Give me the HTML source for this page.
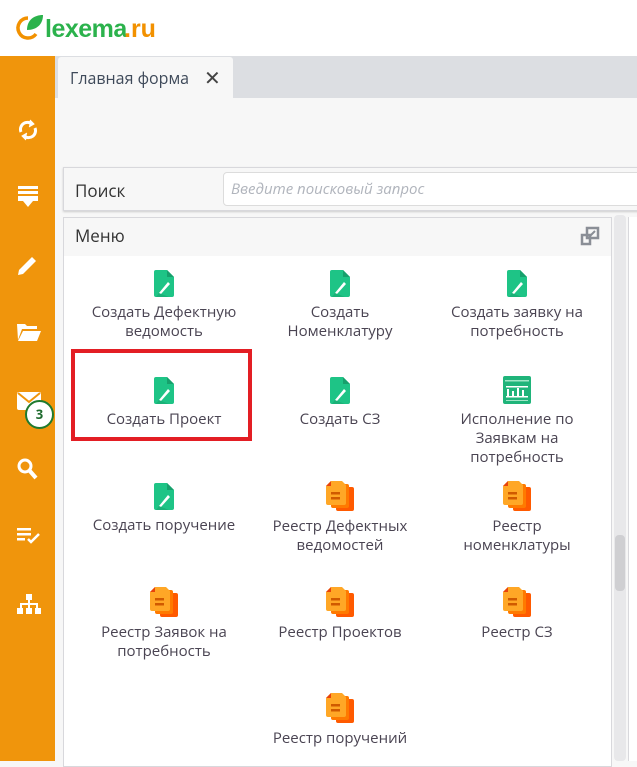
<!DOCTYPE html>
<html><head><meta charset="utf-8"><style>
*{margin:0;padding:0;box-sizing:border-box}
body{width:637px;height:761px;overflow:hidden;position:relative;background:#f7f7f7;font-family:"Open Sans","Liberation Sans","DejaVu Sans",sans-serif;color:#4a4550}
.abs{position:absolute}
.it{position:absolute;width:176px;text-align:center;font-size:15px;line-height:19px;color:#4a4452}
.it svg{display:block;margin:0 auto 6px}
.sb svg{position:absolute;left:17px}
</style></head><body>
<div class="abs" style="left:0;top:0;width:637px;height:56px;background:#fff"></div>
<svg class="abs" style="left:12px;top:10px" width="160" height="34" viewBox="0 0 160 34">
<path d="M16 8 A10 10 0 1 0 24 24" stroke="#f29100" stroke-width="3.5" fill="none"/>
<path d="M15 20 C15 10 22 5 31 5 C31 14 25 20 15 20 Z" fill="#2bb24c"/>
<text x="33" y="27" font-family="Liberation Sans,sans-serif" font-size="25" font-weight="bold" fill="#2bb24c" letter-spacing="-0.5">lexema</text>
<text x="112" y="27" font-family="Liberation Sans,sans-serif" font-size="25" font-weight="bold" fill="#f29100">.ru</text>
</svg>
<div class="abs sb" style="left:0;top:56px;width:55px;height:705px;background:#f0950c">
<svg style="top:62px" width="22" height="24" viewBox="0 0 22 24" fill="none" stroke="#fff" stroke-width="3"><path d="M4 14 A7 7 0 0 1 15 6"/><path d="M18 10 A7 7 0 0 1 7 18"/><path d="M13 2 L17 6 L12 9" fill="#fff" stroke-width="1"/><path d="M9 22 L5 18 L10 15" fill="#fff" stroke-width="1"/></svg>
<svg style="top:130px" width="22" height="22" viewBox="0 0 22 22" fill="#fff"><rect x="1" y="0" width="20" height="3"/><rect x="1" y="5" width="20" height="3"/><rect x="1" y="10" width="20" height="5"/><path d="M6 15 H16 L11 21 Z"/></svg>
<svg style="top:198px" width="22" height="22" viewBox="0 0 22 22" fill="#fff"><path d="M2 16 L15 3 L19 7 L6 20 L1 21 Z"/></svg>
<svg style="top:266px" width="24" height="20" viewBox="0 0 24 20" fill="#fff"><path d="M0 2 H8 L10 4 H20 V7 H5 L1 18 Z"/><path d="M6 9 H24 L20 19 H1 Z"/></svg>
<svg style="top:336px" width="24" height="18" viewBox="0 0 24 18" fill="#fff"><rect x="0" y="0" width="24" height="18" rx="2"/><path d="M1 1 L12 10 L23 1" stroke="#f0950c" stroke-width="2" fill="none"/></svg>
<div class="abs" style="left:25px;top:344px;width:29px;height:29px;border-radius:50%;background:#fff;border:2px solid #1f7a2e;color:#1f6b2e;font-weight:bold;font-size:13px;text-align:center;line-height:25px">3</div>
<svg style="top:402px" width="22" height="24" viewBox="0 0 22 24" fill="none" stroke="#fff" stroke-width="3"><circle cx="8" cy="8" r="6"/><path d="M12 12 L19 20" stroke-width="4"/></svg>
<svg style="top:472px" width="24" height="18" viewBox="0 0 24 18" fill="#fff"><rect x="0" y="0" width="14" height="2.5"/><rect x="0" y="5" width="14" height="2.5"/><rect x="0" y="10" width="8" height="2.5"/><path d="M11 11 L14 14 L22 6" stroke="#fff" stroke-width="2.5" fill="none"/></svg>
<svg style="top:538px" width="24" height="22" viewBox="0 0 24 22" fill="#fff"><rect x="9" y="0" width="6" height="6"/><rect x="11" y="6" width="2" height="4"/><rect x="3" y="9" width="18" height="2"/><rect x="3" y="9" width="2" height="5"/><rect x="19" y="9" width="2" height="5"/><rect x="11" y="9" width="2" height="5"/><rect x="0" y="14" width="6" height="6"/><rect x="9" y="14" width="6" height="6"/><rect x="18" y="14" width="6" height="6"/></svg>
</div>
<div class="abs" style="left:55px;top:56px;width:582px;height:42px;background:#dcdee2"></div>
<div class="abs" style="left:58px;top:57px;width:175px;height:41px;background:#f7f7f7;border-radius:3px 3px 0 0;font-size:16px;color:#3f4a5a;padding:10px 0 0 12px">Главная форма <span style="position:absolute;left:146px;top:7px;font-size:20px;font-weight:bold;color:#444">✕</span></div>
<div class="abs" style="left:63px;top:167px;width:580px;height:44px;background:#f7f7f7;border:1px solid #d8d8dc;box-shadow:0 1px 2px #ccc"></div>
<div class="abs" style="left:75px;top:179px;font-size:17px;color:#333">Поиск</div>
<div class="abs" style="left:223px;top:172px;width:420px;height:34px;background:#fff;border:1px solid #dcdcdc;border-radius:4px;font-size:15px;font-style:italic;color:#b0b4bc;padding:6px 7px">Введите поисковый запрос</div>
<div class="abs" style="left:63px;top:217px;width:549px;height:550px;background:#fff;border:1px solid #d8d8dc"></div>
<div class="abs" style="left:64px;top:218px;width:547px;height:38px;background:#f7f7f7"></div>
<div class="abs" style="left:75px;top:224px;font-size:17px;color:#333">Меню</div>
<svg class="abs" style="left:580px;top:226px" width="20" height="20" viewBox="0 0 20 20" fill="none" stroke="#8a8e96" stroke-width="2.5"><rect x="7" y="2" width="11" height="10"/><rect x="2" y="9" width="8" height="9"/><path d="M9 11 L15 5" stroke-width="2"/></svg>
<div class="abs" style="left:614px;top:215px;width:12px;height:546px;background:#e8e8ea;border-radius:4px"></div>
<div class="abs" style="left:615px;top:535px;width:10px;height:56px;background:#cfcfd2;border-radius:4px"></div>
<div class="abs" style="left:628px;top:217px;width:9px;height:544px;background:#fff;border-left:1px solid #d8d8dc"></div>

<svg width="0" height="0" style="position:absolute"><defs>
<symbol id="g" viewBox="0 0 20 27"><path d="M2 0 H13 L20 7 V25 Q20 27 18 27 H2 Q0 27 0 25 V2 Q0 0 2 0Z" fill="#1ec486"/><path d="M13 0 L20 7 H13Z" fill="#17a06c"/><path d="M5 23 L14 12 L16 14 L7 24 Z" fill="#fff"/><path d="M5 23 L15 27 H2Z" fill="#16a06a" opacity=".5"/></symbol>
<symbol id="o" viewBox="0 0 28 30"><rect x="10" y="6" width="18" height="24" rx="2" fill="#ff5a00"/><rect x="5" y="3" width="18" height="24" rx="2" fill="#ff7a00"/><path d="M5 0 H16 L20 4 V22 Q20 24 18 24 H2 Q0 24 0 22 V5Z" fill="#ffa726"/><path d="M0 5 L5 0 V5Z" fill="#e8430a"/><rect x="5" y="11" width="9" height="2.5" fill="#d05a00"/><rect x="5" y="16" width="9" height="2.5" fill="#d05a00"/></symbol>
</defs></svg>

<div class="it" style="left:76px;top:270px"><svg width="20" height="27"><use href="#g"/></svg>Создать Дефектную<br>ведомость</div>
<div class="it" style="left:252px;top:270px"><svg width="20" height="27"><use href="#g"/></svg>Создать<br>Номенклатуру</div>
<div class="it" style="left:429px;top:270px"><svg width="20" height="27"><use href="#g"/></svg>Создать заявку на<br>потребность</div>
<div class="it" style="left:76px;top:377px"><svg width="20" height="27"><use href="#g"/></svg>Создать Проект</div>
<div class="it" style="left:252px;top:377px"><svg width="20" height="27"><use href="#g"/></svg>Создать СЗ</div>
<div class="it" style="left:429px;top:376px"><svg width="28" height="28" viewBox="0 0 28 28"><rect width="28" height="28" rx="2" fill="#1fb47a"/><rect x="2" y="4" width="24" height="1.5" fill="#9fe6c6"/><rect x="3" y="10" width="22" height="1.5" fill="#fff"/><rect x="4" y="13" width="2" height="7" fill="#fff"/><rect x="9" y="15" width="2" height="5" fill="#fff"/><rect x="14" y="12" width="2" height="8" fill="#fff"/><rect x="19" y="14" width="2" height="6" fill="#fff"/><rect x="3" y="20" width="22" height="1.5" fill="#fff"/><rect x="3" y="24" width="22" height="1" fill="#9fe6c6"/></svg>Исполнение по<br>Заявкам на<br>потребность</div>
<div class="it" style="left:76px;top:483px"><svg width="20" height="27"><use href="#g"/></svg>Создать поручение</div>
<div class="it" style="left:252px;top:481px"><svg width="30" height="30"><use href="#o"/></svg>Реестр Дефектных<br>ведомостей</div>
<div class="it" style="left:429px;top:481px"><svg width="30" height="30"><use href="#o"/></svg>Реестр<br>номенклатуры</div>
<div class="it" style="left:76px;top:587px"><svg width="30" height="30"><use href="#o"/></svg>Реестр Заявок на<br>потребность</div>
<div class="it" style="left:252px;top:587px"><svg width="30" height="30"><use href="#o"/></svg>Реестр Проектов</div>
<div class="it" style="left:429px;top:587px"><svg width="30" height="30"><use href="#o"/></svg>Реестр СЗ</div>
<div class="it" style="left:252px;top:693px"><svg width="30" height="30"><use href="#o"/></svg>Реестр поручений</div>
<div class="abs" style="left:71px;top:349px;width:181px;height:92px;border:4px solid #e31e24"></div>
</body></html>
